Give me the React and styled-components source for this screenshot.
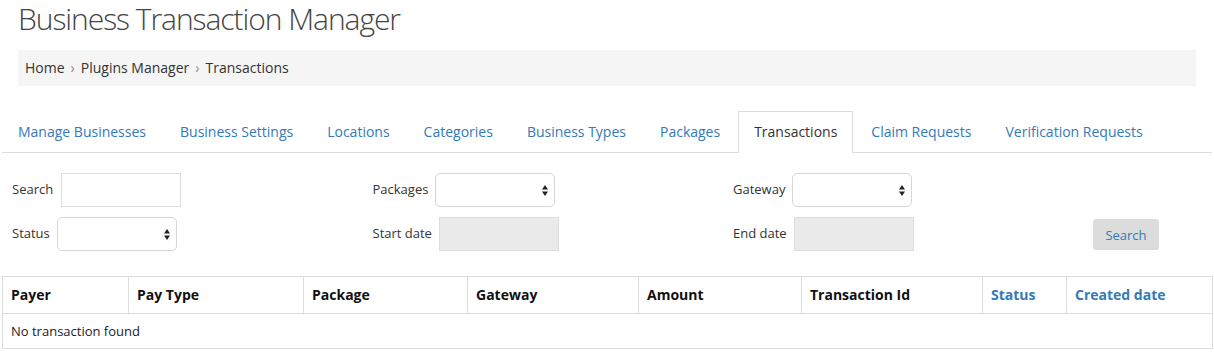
import React from "react";
import styled, { createGlobalStyle } from "styled-components";

const GlobalStyle = createGlobalStyle`
  * { box-sizing: border-box; }
  body {
    margin: 0;
    background: #fff;
    font-family: "Open Sans", "Liberation Sans", sans-serif;
    color: #333;
  }
`;

const Page = styled.div`
  padding: 0 2px;
  width: 1214px;
`;

const Title = styled.h1`
  margin: 2px 0 0 16px;
  font-size: 30px;
  line-height: 33px;
  font-weight: 300;
  letter-spacing: -1.05px;
  color: #444;
`;

const Breadcrumb = styled.ol`
  display: flex;
  align-items: center;
  list-style: none;
  margin: 15px 16px 0 16px;
  padding: 8px 7px;
  background: #f5f5f5;
  font-size: 14px;
  line-height: 20px;
`;

const Crumb = styled.li`
  color: #333;
  & + &::before {
    content: "›";
    color: #888;
    padding: 0 6px;
  }
`;

const Tabs = styled.ul`
  display: flex;
  list-style: none;
  margin: 25px 0 0;
  padding: 0;
  border-bottom: 1px solid #ddd;
`;

const Tab = styled.li`
  margin: 0 2px -1px 0;
  padding: 10px 15px 11px;
  font-size: 14px;
  line-height: 20px;
  border: 1px solid ${({ $active }) => ($active ? "#ddd" : "transparent")};
  border-bottom: none;
  background: ${({ $active }) => ($active ? "#fff" : "transparent")};
  color: ${({ $active }) => ($active ? "#333" : "#337ab7")};
`;

const Filters = styled.div`
  display: grid;
  grid-template-columns: 360.5px 360.5px 360px auto;
  row-gap: 10px;
  padding: 20px 10px 0;
`;

const Field = styled.div`
  display: flex;
  align-items: center;
  height: 34px;
`;

const Label = styled.label`
  font-size: 13px;
  margin-right: 8px;
  margin-top: -2px;
  color: #333;
`;

const TextBox = styled.div`
  width: 120px;
  height: 34px;
  margin-left: ${({ $disabled }) => ($disabled ? "-1px" : "0")};
  border: 1px solid #ddd;
  background: ${({ $disabled }) => ($disabled ? "#eaeaea" : "#fff")};
`;

const SelectBox = styled.div`
  position: relative;
  width: 120px;
  height: 34px;
  margin-left: -1px;
  border: 1px solid #d6d6d6;
  border-radius: 5px;
  background: #fff;
`;

const Arrows = styled.svg`
  position: absolute;
  right: 6px;
  top: 11px;
`;

const Button = styled.button`
  margin-top: 1px;
  width: 66px;
  height: 31px;
  border: none;
  border-radius: 3px;
  background: #dcdcdc;
  color: #337ab7;
  font-family: inherit;
  font-size: 13px;
`;

const Table = styled.table`
  margin-top: 25px;
  width: 1210px;
  border-collapse: collapse;
  table-layout: fixed;
  border: 1px solid #ddd;
`;

const Th = styled.th`
  text-align: left;
  padding: 8px;
  font-size: 14px;
  line-height: 20px;
  font-weight: 700;
  border: 1px solid #ddd;
  color: ${({ $link }) => ($link ? "#337ab7" : "#111")};
`;

const Td = styled.td`
  padding: 8px;
  font-size: 13px;
  line-height: 18px;
  border: 1px solid #ddd;
  color: #222;
`;

const Select = () => (
  <SelectBox>
    <Arrows width="6" height="11" viewBox="0 0 6 11">
      <path d="M3 0 L6 4.5 L0 4.5 Z M0 6.5 L6 6.5 L3 11 Z" fill="#222" />
    </Arrows>
  </SelectBox>
);

const tabs = [
  "Manage Businesses",
  "Business Settings",
  "Locations",
  "Categories",
  "Business Types",
  "Packages",
  "Transactions",
  "Claim Requests",
  "Verification Requests",
];

const columns = [
  { name: "Payer", width: 126 },
  { name: "Pay Type", width: 175 },
  { name: "Package", width: 164 },
  { name: "Gateway", width: 171 },
  { name: "Amount", width: 163 },
  { name: "Transaction Id", width: 181 },
  { name: "Status", width: 84, link: true },
  { name: "Created date", width: 146, link: true },
];

export default function App() {
  return (
    <Page>
      <GlobalStyle />
      <Title>Business Transaction Manager</Title>
      <Breadcrumb>
        <Crumb>Home</Crumb>
        <Crumb>Plugins Manager</Crumb>
        <Crumb>Transactions</Crumb>
      </Breadcrumb>
      <Tabs>
        {tabs.map((t) => (
          <Tab key={t} $active={t === "Transactions"}>
            {t}
          </Tab>
        ))}
      </Tabs>
      <Filters>
        <Field>
          <Label>Search</Label>
          <TextBox />
        </Field>
        <Field>
          <Label>Packages</Label>
          <Select />
        </Field>
        <Field>
          <Label>Gateway</Label>
          <Select />
        </Field>
        <div />
        <Field>
          <Label>Status</Label>
          <Select />
        </Field>
        <Field>
          <Label>Start date</Label>
          <TextBox $disabled />
        </Field>
        <Field>
          <Label>End date</Label>
          <TextBox $disabled />
        </Field>
        <Field>
          <Button>Search</Button>
        </Field>
      </Filters>
      <Table>
        <colgroup>
          {columns.map((c) => (
            <col key={c.name} style={{ width: c.width }} />
          ))}
        </colgroup>
        <thead>
          <tr>
            {columns.map((c) => (
              <Th key={c.name} $link={c.link}>
                {c.name}
              </Th>
            ))}
          </tr>
        </thead>
        <tbody>
          <tr>
            <Td colSpan={8}>No transaction found</Td>
          </tr>
        </tbody>
      </Table>
    </Page>
  );
}
